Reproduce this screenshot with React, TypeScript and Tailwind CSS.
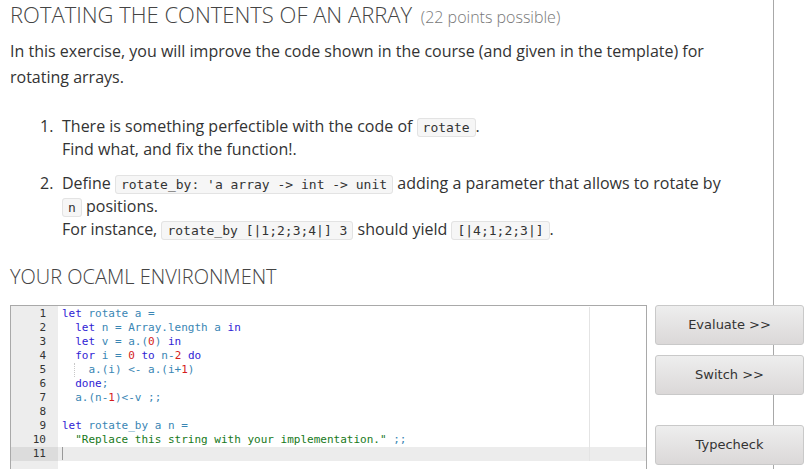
type Tok = [string, "k" | "i" | "n" | "s"];

const tone: Record<Tok[1], string> = {
  k: "text-[#2f22d4]",
  i: "text-[#3a86b4]",
  n: "text-[#d41c1c]",
  s: "text-[#17791a]",
};

const code: Tok[][] = [
  [["let", "k"], [" rotate a =", "i"]],
  [["  ", "i"], ["let", "k"], [" n = Array.length a ", "i"], ["in", "k"]],
  [["  ", "i"], ["let", "k"], [" v = a.(", "i"], ["0", "n"], [") ", "i"], ["in", "k"]],
  [["  ", "i"], ["for", "k"], [" i = ", "i"], ["0", "n"], [" ", "i"], ["to", "k"], [" n-", "i"], ["2", "n"], [" ", "i"], ["do", "k"]],
  [["  ", "i"], ["  a.(i) <- a.(i+", "i"], ["1", "n"], [")", "i"]],
  [["  ", "i"], ["done", "k"], [";", "i"]],
  [["  a.(n-", "i"], ["1", "n"], [")<-v ;;", "i"]],
  [],
  [["let", "k"], [" rotate_by a n =", "i"]],
  [["  ", "i"], ['"Replace this string with your implementation."', "s"], [" ;;", "i"]],
  [],
];

function Code({ children }: { children: React.ReactNode }) {
  return (
    <code className="rounded-[3px] border border-[#e3e3e3] bg-[#f6f6f6] px-[5px] py-px font-['DejaVu_Sans_Mono',monospace] text-[13px] leading-none text-[#333]">
      {children}
    </code>
  );
}

function Button({ label }: { label: string }) {
  return (
    <button className="h-10 w-[149px] rounded-[3px] border border-[#c9c9c9] bg-gradient-to-b from-[#eeeeee] to-[#dbd8d8] font-['DejaVu_Sans',sans-serif] text-[13px] text-[#333]">
      {label}
    </button>
  );
}

export default function App() {
  return (
    <div className="min-h-[469px] w-[809px] bg-white font-['Open_Sans',sans-serif] text-[#333]">
      <div className="w-[774px] border-r border-[#a8a8a8] pl-[10px]">
        <h2 className="text-[22px] leading-[28px] font-light text-[#444]">
          ROTATING THE CONTENTS OF AN ARRAY{" "}
          <span className="ml-[3px] text-[16px] text-[#777]">(22 points possible)</span>
        </h2>
        <p className="mt-[7px] pr-[50px] text-[16px] leading-[26px]">
          In this exercise, you will improve the code shown in the course (and given in the template) for
          rotating arrays.
        </p>
        <ol className="mt-[25px] pl-[30px] text-[16px] leading-[23px]">
          <li className="flex">
            <span className="w-[22px] shrink-0">1.</span>
            <div>
              There is something perfectible with the code of <Code>rotate</Code>.
              <br />
              Find what, and fix the function!.
            </div>
          </li>
          <li className="mt-[11px] flex">
            <span className="w-[22px] shrink-0">2.</span>
            <div className="pr-[40px]">
              Define <Code>rotate_by: 'a array -&gt; int -&gt; unit</Code> adding a parameter that allows to rotate by{" "}
              <Code>n</Code> positions.
              <br />
              For instance, <Code>rotate_by [|1;2;3;4|] 3</Code> should yield <Code>[|4;1;2;3|]</Code>.
            </div>
          </li>
        </ol>
        <h2 className="mt-[22px] text-[20px] leading-[28px] font-light text-[#444]">YOUR OCAML ENVIRONMENT</h2>
        <div className="mt-[14px] flex gap-[8px]">
          <div className="flex h-[170px] w-[637px] shrink-0 border border-[#a9a9a9] font-['DejaVu_Sans_Mono',monospace] text-[11px] leading-[14px]">
            <div className="w-[47px] shrink-0 bg-[#ededed] pt-px text-right text-[#333]">
              {code.map((_, i) => (
                <div key={i} className={`pr-[12px] ${i === 10 ? "bg-[#dcdcdc]" : ""}`}>
                  {i + 1}
                </div>
              ))}
            </div>
            <div className="flex-1 pt-px">
              {code.map((line, i) => (
                <div
                  key={i}
                  className={`flex h-[14px] whitespace-pre ${i === 10 ? "bg-[#ececec]" : ""}`}
                >
                  <div className="w-[532px] shrink-0 border-r border-[#e4e4e4] pl-[4px]">
                    {i === 4 && <span className="inline-block h-[14px] w-[13.2px] border-r border-dotted border-[#c8c8c8] align-top" />}
                    {line.map(([t, c], j) =>
                      i === 4 && j === 0 ? null : (
                        <span key={j} className={tone[c]}>
                          {t}
                        </span>
                      ),
                    )}
                    {i === 10 && <span className="inline-block h-[13px] w-px bg-[#999] align-top" />}
                  </div>
                </div>
              ))}
            </div>
          </div>
          <div className="flex shrink-0 flex-col">
            <Button label="Evaluate >>" />
            <div className="mt-[10px]">
              <Button label="Switch >>" />
            </div>
            <div className="mt-[30px]">
              <Button label="Typecheck" />
            </div>
          </div>
        </div>
      </div>
    </div>
  );
}
